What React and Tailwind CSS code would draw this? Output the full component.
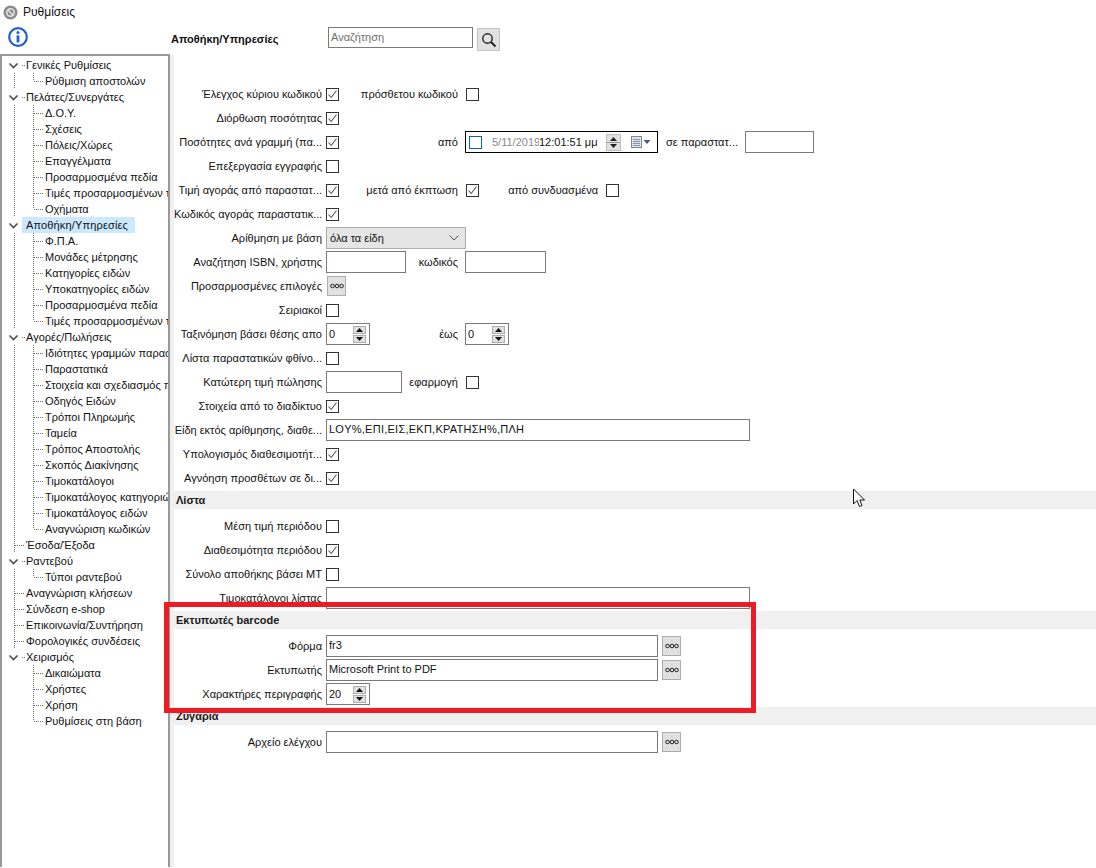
import React from "react";

const TREE = [
  ["Γενικές Ρυθμίσεις", 0, 1], ["Ρύθμιση αποστολών", 1, 0, 1],
  ["Πελάτες/Συνεργάτες", 0, 1], ["Δ.Ο.Υ.", 1], ["Σχέσεις", 1], ["Πόλεις/Χώρες", 1], ["Επαγγέλματα", 1], ["Προσαρμοσμένα πεδία", 1], ["Τιμές προσαρμοσμένων τ", 1], ["Οχήματα", 1, 0, 1],
  ["Αποθήκη/Υπηρεσίες", 0, 1], ["Φ.Π.Α.", 1], ["Μονάδες μέτρησης", 1], ["Κατηγορίες ειδών", 1], ["Υποκατηγορίες ειδών", 1], ["Προσαρμοσμένα πεδία", 1], ["Τιμές προσαρμοσμένων τ", 1, 0, 1],
  ["Αγορές/Πωλήσεις", 0, 1], ["Ιδιότητες γραμμών παρασ", 1], ["Παραστατικά", 1], ["Στοιχεία και σχεδιασμός π", 1], ["Οδηγός Ειδών", 1], ["Τρόποι Πληρωμής", 1], ["Ταμεία", 1], ["Τρόπος Αποστολής", 1], ["Σκοπός Διακίνησης", 1], ["Τιμοκατάλογοι", 1], ["Τιμοκατάλογος κατηγοριώ", 1], ["Τιμοκατάλογος ειδών", 1], ["Αναγνώριση κωδικών", 1, 0, 1],
  ["Έσοδα/Έξοδα", 0, 0],
  ["Ραντεβού", 0, 1], ["Τύποι ραντεβού", 1, 0, 1],
  ["Αναγνώριση κλήσεων", 0, 0], ["Σύνδεση e-shop", 0, 0], ["Επικοινωνία/Συντήρηση", 0, 0], ["Φορολογικές συνδέσεις", 0, 0],
  ["Χειρισμός", 0, 1, 0, 1], ["Δικαιώματα", 1, 0, 0, 1], ["Χρήστες", 1, 0, 0, 1], ["Χρήση", 1, 0, 0, 1], ["Ρυθμίσεις στη βάση", 1, 0, 1, 1],
];

function Glyph({ level, expanded, last, noRoot }) {
  const dot = { stroke: "#707070", strokeDasharray: "1 1", shapeRendering: "crispEdges" };
  return (
    <svg width="45" height="16" className="shrink-0" style={{ width: level ? 45 : 26 }} viewBox={level ? "0 0 45 16" : "0 0 26 16"}>
      {level === 1 && !noRoot && <line x1="14.5" y1="0" x2="14.5" y2="16" {...dot} />}
      {level === 1 && <line x1="33.5" y1="0" x2="33.5" y2={last ? 8 : 16} {...dot} />}
      {level === 1 && <line x1="34" y1="8.5" x2="44" y2="8.5" {...dot} />}
      {level === 0 && !expanded && <line x1="14.5" y1="0" x2="14.5" y2="16" {...dot} />}
      {level === 0 && !expanded && <line x1="15" y1="8.5" x2="25" y2="8.5" {...dot} />}
      {level === 0 && expanded && <line x1="22" y1="8.5" x2="25" y2="8.5" {...dot} />}
      {level === 0 && expanded && (
        <path d="M9.5 6.5 L13.5 10.5 L17.5 6.5" fill="none" stroke="#4d4d4d" strokeWidth="1.6" />
      )}
    </svg>
  );
}

function Sidebar() {
  return (
    <div className="w-[170px] shrink-0 h-[813px] border-t-2 border-r-2 border-l-2 border-[#999999] overflow-hidden pt-[1px] -mt-px">
      {TREE.map(([t, level, expanded, last, noRoot], i) => (
        <div key={i} className="flex h-4 items-center whitespace-nowrap -ml-[2px]">
          <Glyph level={level} expanded={!!expanded} last={!!last} noRoot={!!noRoot} />
          <span className={t === "Αποθήκη/Υπηρεσίες" ? "bg-[#cce8ff] h-4 leading-4 -ml-[4px] pl-[4px] pr-[7px] tracking-[0.15px]" : "leading-4"}>{t}</span>
        </div>
      ))}
    </div>
  );
}

const Check = ({ on, className = "" }) => (
  <span className={"shrink-0 w-[13px] h-[13px] border border-[#333333] bg-white flex items-center justify-center " + className}>
    {on && (
      <svg width="11" height="11" viewBox="0 0 11 11">
        <path d="M1.5 5.5 L4.2 8.5 L9.5 1.5" fill="none" stroke="#555555" strokeWidth="1.1" />
      </svg>
    )}
  </span>
);

const L = ({ className = "", children }) => (
  <span className={"shrink-0 text-right whitespace-nowrap " + className}>{children}</span>
);

const Row = ({ label, children }) => (
  <div className="flex h-6 items-center">
    <L className="w-[148px] mr-1">{label}</L>
    {children}
  </div>
);

const Input = ({ className = "", children }) => (
  <span className={"shrink-0 h-[22px] border border-[#7a7a7a] bg-white pl-[2px] leading-[19px] whitespace-nowrap " + className}>{children}</span>
);

const Dots = ({ className = "" }) => (
  <span className={"shrink-0 w-[19px] h-[20px] bg-[#e1e1e1] border border-[#adadad] flex items-center justify-center " + className}>
    <svg width="14" height="6" viewBox="0 0 14 6">
      <circle cx="2.5" cy="3" r="1.8" fill="none" stroke="#222" strokeWidth="1" />
      <circle cx="7" cy="3" r="1.8" fill="none" stroke="#222" strokeWidth="1" />
      <circle cx="11.5" cy="3" r="1.8" fill="none" stroke="#222" strokeWidth="1" />
    </svg>
  </span>
);

const Arrow = ({ down }) => (
  <span className="w-[13px] h-[8px] bg-[#e1e1e1] border border-[#adadad] flex items-center justify-center">
    <svg width="7" height="4" viewBox="0 0 7 4">
      <path d={down ? "M0 0 H7 L3.5 4 Z" : "M0 4 H7 L3.5 0 Z"} fill="#111" />
    </svg>
  </span>
);

const Spin = ({ value, className = "" }) => (
  <span className={"shrink-0 w-[44px] h-[22px] border border-[#7a7a7a] bg-white flex items-center justify-between pl-[2px] pr-[2px] " + className}>
    <span>{value}</span>
    <span className="flex flex-col gap-[1px] mr-[1px]"><Arrow /><Arrow down /></span>
  </span>
);

const Band = ({ children }) => (
  <div className="h-[18px] mt-px mb-[5px] bg-[#f0f0f0] pl-[2px] font-bold leading-[18px] text-[#1a1a1a]">{children}</div>
);

function DatePicker() {
  return (
    <span className="shrink-0 w-[193px] h-[22px] border border-black bg-white flex items-center ml-[7px]">
      <span className="w-[13px] h-[13px] border border-[#0a64ad] ml-[3px] shrink-0" />
      <span className="ml-[10px] text-[#8a8a8a] w-[47px] overflow-hidden whitespace-nowrap">5/11/2019</span>
      <span className="whitespace-nowrap w-[60px]">12:01:51 μμ</span>
      <span className="ml-[7px] flex flex-col items-center gap-[1px] w-[15px] h-[17px] bg-[#e1e1e1] border border-[#c0c0c0] justify-center shrink-0">
        <svg width="7" height="4" viewBox="0 0 7 4"><path d="M0 4 H7 L3.5 0 Z" fill="#222" /></svg>
        <span className="w-full h-px bg-[#999]" />
        <svg width="7" height="4" viewBox="0 0 7 4"><path d="M0 0 H7 L3.5 4 Z" fill="#222" /></svg>
      </span>
      <svg className="ml-[10px] shrink-0" width="20" height="12" viewBox="0 0 20 12">
        <rect x="0.5" y="0.5" width="10" height="11" fill="#dfe3ea" stroke="#7f8794" />
        <path d="M2 3.5H9M2 5.5H9M2 7.5H9M2 9.5H9" stroke="#8a93a3" />
        <path d="M12.5 4 H19.5 L16 8 Z" fill="#4a5a7a" />
      </svg>
    </span>
  );
}

export default function App() {
  return (
    <div className="relative w-[1096px] h-[868px] overflow-hidden bg-white text-[#111] text-[11px] font-['Liberation_Sans',sans-serif]">
      <div className="flex items-center h-[24px] pl-[3px]">
        <svg width="15" height="15" viewBox="0 0 15 15">
          <circle cx="7.5" cy="7.5" r="7" fill="#8a8a8a" />
          <circle cx="7.5" cy="7.5" r="3.7" fill="none" stroke="#e6e6e6" strokeWidth="1.5" />
          <path d="M5 5 L10 10" stroke="#e6e6e6" strokeWidth="1.5" />
        </svg>
        <span className="ml-[5px] text-[12px]">Ρυθμίσεις</span>
      </div>
      <div className="flex h-[31px] pl-[8px]">
        <svg className="mt-[3px]" width="20" height="20" viewBox="0 0 20 20">
          <circle cx="10" cy="10" r="8.8" fill="white" stroke="#1c5fd0" strokeWidth="2.2" />
          <circle cx="10" cy="5.6" r="1.5" fill="#1c5fd0" />
          <rect x="8.6" y="8.4" width="2.8" height="7" fill="#1c5fd0" />
        </svg>
        <span className="ml-[143px] w-[157px] font-bold pt-[7px]">Αποθήκη/Υπηρεσίες</span>
        <span className="mt-[3px] w-[145px] h-[21px] border border-[#7a7a7a] pl-[2px] text-[#6d6d6d] leading-[18px]">Αναζήτηση</span>
        <span className="ml-[4px] mt-[4px] w-[23px] h-[23px] bg-[#e1e1e1] border border-[#c4c4c4] flex items-center justify-center">
          <svg width="16" height="16" viewBox="0 0 16 16">
            <circle cx="6.5" cy="6.5" r="4.7" fill="none" stroke="#222" strokeWidth="1.4" />
            <path d="M10 10 L14.5 14.5" stroke="#222" strokeWidth="2" />
          </svg>
        </span>
      </div>
      <div className="flex">
        <Sidebar />
        <div className="flex-1 border-l-4 border-[#f0f0f0] pt-[27px]">
          <Row label="Έλεγχος κύριου κωδικού"><Check on /><L className="w-[119px]">πρόσθετου κωδικού</L><Check className="ml-2" /></Row>
          <Row label="Διόρθωση ποσότητας"><Check on /></Row>
          <Row label="Ποσότητες ανά γραμμή (πα..."><Check on /><L className="w-[119px]">από</L><DatePicker /><L className="w-[80px]">σε παραστατ...</L><Input className="ml-[7px] w-[69px]" /></Row>
          <Row label="Επεξεργασία εγγραφής"><Check /></Row>
          <Row label="Τιμή αγοράς από παραστατ..."><Check on /><L className="w-[119px]">μετά από έκπτωση</L><Check on className="ml-2" /><L className="w-[119px]">από συνδυασμένα</L><Check className="ml-2" /></Row>
          <Row label="Κωδικός αγοράς παραστατικ..."><Check on /></Row>
          <Row label="Αρίθμηση με βάση">
            <span className="shrink-0 w-[140px] h-[22px] bg-[#e5e5e5] border border-[#adadad] flex items-center justify-between pl-[3px] pr-[6px]">
              όλα τα είδη
              <svg width="10" height="6" viewBox="0 0 10 6"><path d="M0.5 0.5 L5 5 L9.5 0.5" fill="none" stroke="#555" /></svg>
            </span>
          </Row>
          <Row label="Αναζήτηση ISBN, χρήστης"><Input className="w-[80px]" /><L className="w-[52px]">κωδικός</L><Input className="ml-[7px] w-[81px]" /></Row>
          <Row label="Προσαρμοσμένες επιλογές"><Dots className="ml-px" /></Row>
          <Row label="Σειριακοί"><Check /></Row>
          <Row label="Ταξινόμηση βάσει θέσης απο"><Spin value="0" /><L className="w-[88px]">έως</L><Spin value="0" className="ml-[7px]" /></Row>
          <Row label="Λίστα παραστατικών φθίνο..."><Check /></Row>
          <Row label="Κατώτερη τιμή πώλησης"><Input className="w-[76px]" /><L className="w-[56px]">εφαρμογή</L><Check className="ml-2" /></Row>
          <Row label="Στοιχεία από το διαδίκτυο"><Check on /></Row>
          <Row label="Είδη εκτός αρίθμησης, διαθε..."><Input className="w-[424px] tracking-[0.25px]">LOY%,ΕΠΙ,ΕΙΣ,ΕΚΠ,ΚΡΑΤΗΣΗ%,ΠΛΗ</Input></Row>
          <Row label="Υπολογισμός διαθεσιμοτήτ..."><Check on /></Row>
          <Row label="Αγνόηση προσθέτων σε δι..."><Check on /></Row>
          <Band>Λίστα</Band>
          <Row label="Μέση τιμή περιόδου"><Check /></Row>
          <Row label="Διαθεσιμότητα περιόδου"><Check on /></Row>
          <Row label="Σύνολο αποθήκης βάσει ΜΤ"><Check /></Row>
          <Row label="Τιμοκατάλογοι λίστας"><Input className="w-[424px]" /></Row>
          <Band>Εκτυπωτές barcode</Band>
          <Row label="Φόρμα"><Input className="w-[332px]">fr3</Input><Dots className="ml-1" /></Row>
          <Row label="Εκτυπωτής"><Input className="w-[332px]">Microsoft Print to PDF</Input><Dots className="ml-1" /></Row>
          <Row label="Χαρακτήρες περιγραφής"><Spin value="20" /></Row>
          <Band>Ζυγαριά</Band>
          <Row label="Αρχείο ελέγχου"><Input className="w-[332px]" /><Dots className="ml-1" /></Row>
        </div>
      </div>
      <div className="absolute left-[164px] top-[602px] w-[592px] h-[111px] border-[5px] border-[#ed1c24]" />
      <svg className="absolute left-[852px] top-[488px]" width="14" height="21" viewBox="0 0 14 21">
        <path d="M1.5 1 V16 L5 12.5 L7.5 18.5 L10 17.5 L7.8 12 H12.5 Z" fill="white" stroke="#111" strokeWidth="1" />
      </svg>
    </div>
  );
}
